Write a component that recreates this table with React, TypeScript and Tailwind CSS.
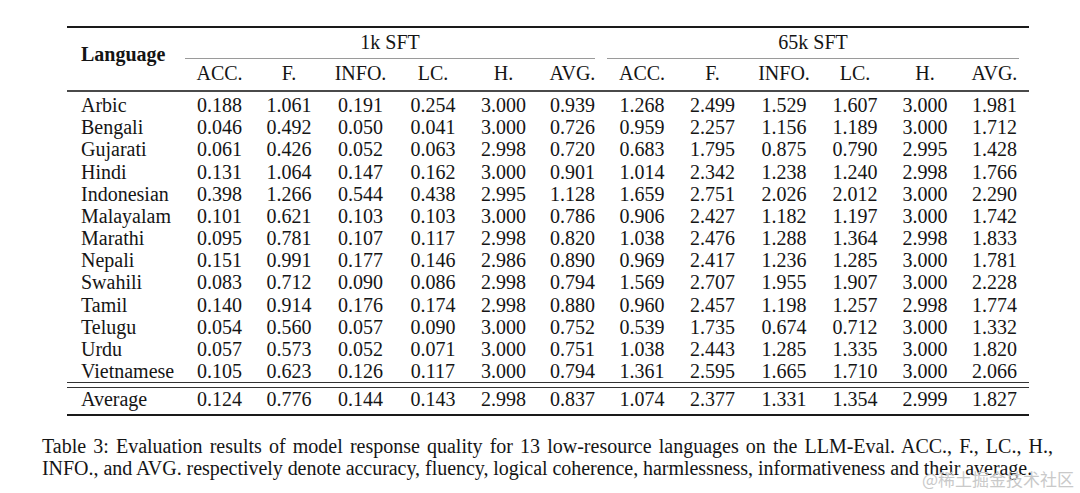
const rows: [string, string[]][] = [
  ["Arbic", ["0.188", "1.061", "0.191", "0.254", "3.000", "0.939", "1.268", "2.499", "1.529", "1.607", "3.000", "1.981"]],
  ["Bengali", ["0.046", "0.492", "0.050", "0.041", "3.000", "0.726", "0.959", "2.257", "1.156", "1.189", "3.000", "1.712"]],
  ["Gujarati", ["0.061", "0.426", "0.052", "0.063", "2.998", "0.720", "0.683", "1.795", "0.875", "0.790", "2.995", "1.428"]],
  ["Hindi", ["0.131", "1.064", "0.147", "0.162", "3.000", "0.901", "1.014", "2.342", "1.238", "1.240", "2.998", "1.766"]],
  ["Indonesian", ["0.398", "1.266", "0.544", "0.438", "2.995", "1.128", "1.659", "2.751", "2.026", "2.012", "3.000", "2.290"]],
  ["Malayalam", ["0.101", "0.621", "0.103", "0.103", "3.000", "0.786", "0.906", "2.427", "1.182", "1.197", "3.000", "1.742"]],
  ["Marathi", ["0.095", "0.781", "0.107", "0.117", "2.998", "0.820", "1.038", "2.476", "1.288", "1.364", "2.998", "1.833"]],
  ["Nepali", ["0.151", "0.991", "0.177", "0.146", "2.986", "0.890", "0.969", "2.417", "1.236", "1.285", "3.000", "1.781"]],
  ["Swahili", ["0.083", "0.712", "0.090", "0.086", "2.998", "0.794", "1.569", "2.707", "1.955", "1.907", "3.000", "2.228"]],
  ["Tamil", ["0.140", "0.914", "0.176", "0.174", "2.998", "0.880", "0.960", "2.457", "1.198", "1.257", "2.998", "1.774"]],
  ["Telugu", ["0.054", "0.560", "0.057", "0.090", "3.000", "0.752", "0.539", "1.735", "0.674", "0.712", "3.000", "1.332"]],
  ["Urdu", ["0.057", "0.573", "0.052", "0.071", "3.000", "0.751", "1.038", "2.443", "1.285", "1.335", "3.000", "1.820"]],
  ["Vietnamese", ["0.105", "0.623", "0.126", "0.117", "3.000", "0.794", "1.361", "2.595", "1.665", "1.710", "3.000", "2.066"]],
];

const average = ["0.124", "0.776", "0.144", "0.143", "2.998", "0.837", "1.074", "2.377", "1.331", "1.354", "2.999", "1.827"];

const metrics = ["ACC.", "F.", "INFO.", "LC.", "H.", "AVG."];

function DataRow({ name, values }: { name: string; values: string[] }) {
  return (
    <tr className="h-[22.17px]">
      <td className="p-0 pl-[14px] text-left">{name}</td>
      {values.map((v, i) => (
        <td key={i} className="p-0 text-center">
          {v}
        </td>
      ))}
    </tr>
  );
}

export default function App() {
  return (
    <div
      className="relative w-[1080px] h-[493px] overflow-hidden bg-white text-[#151515]"
      style={{ fontFamily: '"Liberation Serif", "Times New Roman", serif' }}
    >
      <table className="ml-[67px] mt-[26px] w-[962px] table-fixed border-separate border-spacing-0 text-[20px] leading-[22.17px]">
        <colgroup>
          <col className="w-[118px]" />
          <col className="w-[69px]" />
          <col className="w-[70px]" />
          <col className="w-[73px]" />
          <col className="w-[72px]" />
          <col className="w-[69px]" />
          <col className="w-[69px]" />
          <col className="w-[70px]" />
          <col className="w-[71px]" />
          <col className="w-[72px]" />
          <col className="w-[70px]" />
          <col className="w-[70px]" />
          <col className="w-[69px]" />
        </colgroup>
        <tbody>
          <tr>
            <td colSpan={13} className="p-0">
              <div className="h-[2px] bg-[#1a1a1a]" />
            </td>
          </tr>
          <tr>
            <td rowSpan={2} className="p-0 pb-[10px] pl-[14px] text-left align-middle font-bold">
              Language
            </td>
            <td colSpan={6} className="p-0">
              <div className="mr-[12px] border-b border-[#9a9a9a] pt-[3px] pb-[5px] text-center leading-[22px]">
                1k SFT
              </div>
            </td>
            <td colSpan={6} className="p-0">
              <div className="mr-[10px] border-b border-[#9a9a9a] pt-[3px] pb-[5px] text-center leading-[22px]">
                65k SFT
              </div>
            </td>
          </tr>
          <tr>
            {[...metrics, ...metrics].map((m, i) => (
              <td key={i} className="p-0 pt-[3px] pb-[6px] text-center leading-[22px]">
                {m}
              </td>
            ))}
          </tr>
          <tr>
            <td colSpan={13} className="p-0 pb-[2px]">
              <div className="h-[2px] bg-[#4a4a4a]" />
            </td>
          </tr>
          {rows.map(([name, values]) => (
            <DataRow key={name} name={name} values={values} />
          ))}
          <tr>
            <td colSpan={13} className="p-0">
              <div className="h-[6px] border-y border-[#333]" />
            </td>
          </tr>
          <DataRow name="Average" values={average} />
          <tr>
            <td colSpan={13} className="p-0 pt-[4px]">
              <div className="h-[2px] bg-[#1a1a1a]" />
            </td>
          </tr>
        </tbody>
      </table>

      <div className="ml-[42px] mt-[19px] w-[1011px] text-[20px] leading-[22px]">
        <p className="text-justify [text-align-last:justify]">
          Table 3: Evaluation results of model response quality for 13 low-resource languages on the LLM-Eval. ACC., F., LC., H.,
        </p>
        <p className="whitespace-nowrap tracking-[-0.04px]">
          INFO., and AVG. respectively denote accuracy, fluency, logical coherence, harmlessness, informativeness and their average.
        </p>
      </div>

      <div
        className="absolute right-[6px] bottom-[4px] text-[17px] leading-[20px] text-[#c9c9c9]"
        style={{ fontFamily: '"Noto Sans CJK SC", sans-serif' }}
      >
        @稀土掘金技术社区
      </div>
    </div>
  );
}
